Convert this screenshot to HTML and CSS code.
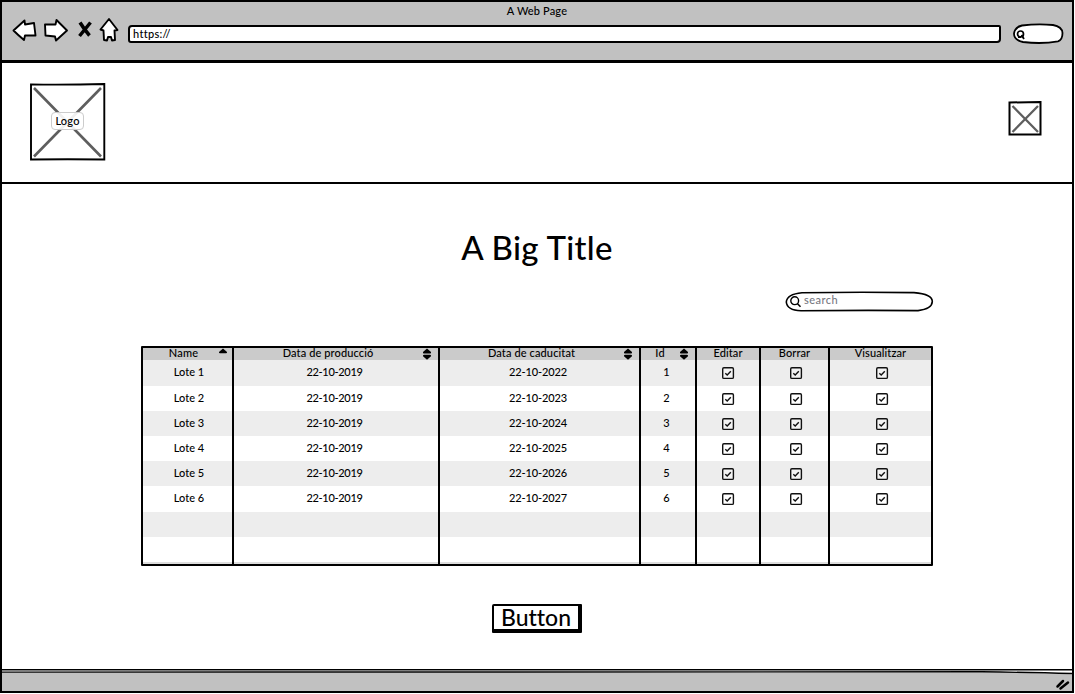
FILE: index.html
```html
<!DOCTYPE html>
<html lang="ca">
<head>
<meta charset="utf-8">
<title>A Web Page</title>
<link rel="stylesheet" href="styles.css">
</head>
<body>
<svg class="symbols" width="0" height="0" aria-hidden="true">
  <symbol id="check" viewBox="0 0 14 14">
    <rect x="1.7" y="1.7" width="10.7" height="10.7" rx="1.2" fill="#fff" fill-opacity=".35" stroke="#111" stroke-width="1.4"/>
    <path d="M4.3 7.2L6.2 9L9.8 5.2" fill="none" stroke="#111" stroke-width="1.4"/>
  </symbol>
  <symbol id="sort" viewBox="0 0 10 12">
    <path d="M5 .4L9 4Q9.4 5.500 8 5.500H2Q.6 5.500 1 4ZM5 11.800L9 8.200Q9.4 6.700 8 6.700H2Q.6 6.700 1 8.200Z"/>
  </symbol>
  <symbol id="asc" viewBox="0 0 10 12">
    <path d="M5 .6L9 4Q9.3 5.2 8 5.2H2Q.7 5.2 1 4Z"/>
  </symbol>
</svg>
<div class="window">
  <header class="chrome">
    <div class="chrome-title"><span>A Web Page</span></div>
    <div class="toolbar">
      <svg class="nav" width="115" height="32" viewBox="0 0 115 32">
        <g fill="#fff" stroke="#000" stroke-width="1.9" stroke-linejoin="round">
          <path d="M2.5 16.5L13.5 6.5L14 10.5L23 9L24.5 21.5L14 21.5L13 26Q7 21 2.5 16.5Z"/>
          <path d="M34 10.5L44.5 10.5L45.5 6L56 16.5L45 26.5L44 22.5L34.5 21.5Z"/>
          <path d="M98 5L89.500 15.5L92.500 16.5L93 26L96 26.5L97 23L100 23L101 26.5L104 26L103.5 16.5L106.500 16Z"/>
        </g>
        <path d="M69 8.500Q73 15 78.500 21.500M79.500 8.500L68.500 22" fill="none" stroke="#000" stroke-width="3.5"/>
      </svg>
      <div class="address"><span>https://</span></div>
      <svg class="mini-search" width="52" height="22" viewBox="0 0 52 22">
        <path d="M10 2.5Q26 .4 41 2Q50 3.500 50.500 10Q50.500 17 46 18.300Q30 21.300 11 19Q2 17 2 10.500Q3 4 10 2.500Z" fill="#fff" stroke="#000" stroke-width="1.8"/>
        <circle cx="8.500" cy="11" r="3" fill="none" stroke="#000" stroke-width="1.7"/>
        <path d="M9.500 12L12 16M6 14H9" stroke="#000" stroke-width="1.8"/>
      </svg>
    </div>
  </header>

  <section class="banner">
    <div class="logo">
      <svg width="76" height="78" viewBox="0 0 76 78">
        <path d="M1 1.500Q38 2 74.300 1V76.500Q38 76 1 76.500Z" fill="#fff" stroke="#000" stroke-width="1.9"/>
        <path d="M4 5L71 73.500M71 5L4 73.500" stroke="#5e5e5e" stroke-width="2.600"/>
      </svg>
      <span class="logo-label"><span>Logo</span></span>
    </div>
    <svg class="picture" width="34" height="35" viewBox="0 0 34 35">
      <path d="M1.500 1.500L32.500 1V33.500L1.500 33.500Z" fill="#fff" stroke="#000" stroke-width="2"/>
      <path d="M4.500 5L30 31M30 5L4.500 31" stroke="#5e5e5e" stroke-width="2.300"/>
    </svg>
  </section>

  <main class="content">
    <h1><span>A Big Title</span></h1>
    <div class="search">
      <svg width="149" height="22" viewBox="0 0 149 22">
        <path d="M17 1.700Q75 .800 129 1.600Q147.300 3 147.300 10.500Q147 18 133 19.600Q75 19 16 19.800Q2 19.200 1.300 11Q2 3 17 1.700Z" fill="#fff" stroke="#000" stroke-width="1.6"/>
        <circle cx="9.700" cy="9.700" r="3.900" fill="none" stroke="#000" stroke-width="1.400"/>
        <path d="M12.300 12.500L15.500 15.700" stroke="#000" stroke-width="1.6"/>
      </svg>
      <span class="placeholder">search</span>
    </div>

    <div class="table">
      <div class="row head">
        <div><span class="h-name">Name</span><svg class="sort"><use href="#asc"/></svg></div>
        <div><span class="h-date">Data de producció</span><svg class="sort"><use href="#sort"/></svg></div>
        <div><span class="h-date">Data de caducitat</span><svg class="sort"><use href="#sort"/></svg></div>
        <div><span class="h-id">Id</span><svg class="sort"><use href="#sort"/></svg></div>
        <div><span class="h-act">Editar</span></div>
        <div><span class="h-act">Borrar</span></div>
        <div><span class="h-act">Visualitzar</span></div>
      </div>
      <div class="row"><div><span>Lote 1</span></div><div><span class="date">22-10-2019</span></div><div><span class="date wide">22-10-2022</span></div><div><span>1</span></div><div><svg class="check"><use href="#check"/></svg></div><div><svg class="check"><use href="#check"/></svg></div><div><svg class="check"><use href="#check"/></svg></div></div>
      <div class="row"><div><span>Lote 2</span></div><div><span class="date">22-10-2019</span></div><div><span class="date wide">22-10-2023</span></div><div><span>2</span></div><div><svg class="check"><use href="#check"/></svg></div><div><svg class="check"><use href="#check"/></svg></div><div><svg class="check"><use href="#check"/></svg></div></div>
      <div class="row"><div><span>Lote 3</span></div><div><span class="date">22-10-2019</span></div><div><span class="date wide">22-10-2024</span></div><div><span>3</span></div><div><svg class="check"><use href="#check"/></svg></div><div><svg class="check"><use href="#check"/></svg></div><div><svg class="check"><use href="#check"/></svg></div></div>
      <div class="row"><div><span>Lote 4</span></div><div><span class="date">22-10-2019</span></div><div><span class="date wide">22-10-2025</span></div><div><span>4</span></div><div><svg class="check"><use href="#check"/></svg></div><div><svg class="check"><use href="#check"/></svg></div><div><svg class="check"><use href="#check"/></svg></div></div>
      <div class="row"><div><span>Lote 5</span></div><div><span class="date">22-10-2019</span></div><div><span class="date wide">22-10-2026</span></div><div><span>5</span></div><div><svg class="check"><use href="#check"/></svg></div><div><svg class="check"><use href="#check"/></svg></div><div><svg class="check"><use href="#check"/></svg></div></div>
      <div class="row"><div><span>Lote 6</span></div><div><span class="date">22-10-2019</span></div><div><span class="date wide">22-10-2027</span></div><div><span>6</span></div><div><svg class="check"><use href="#check"/></svg></div><div><svg class="check"><use href="#check"/></svg></div><div><svg class="check"><use href="#check"/></svg></div></div>
      <div class="row"><div></div><div></div><div></div><div></div><div></div><div></div><div></div></div>
      <div class="row"><div></div><div></div><div></div><div></div><div></div><div></div><div></div></div>
      <div class="row rest"><div></div><div></div><div></div><div></div><div></div><div></div><div></div></div>
    </div>

    <button class="button" type="button"><span>Button</span></button>
  </main>

  <footer class="status">
    <svg width="1070" height="22" viewBox="0 0 1070 22">
      <path d="M0 3.500L980 3.200Q1030 3.800 1071 5.200V24H0Z" fill="#c1c1c1"/>
      <path d="M0 .8H1071" stroke="#000" stroke-width="1.6" fill="none"/>
      <path d="M0 3.100L980 2.800Q1030 3.400 1071 4.600" stroke="#000" stroke-width="1.4" fill="none"/>
      <path d="M1055.500 17.500L1061 12M1058.500 19.500L1066 13.500" stroke="#000" stroke-width="2.500" stroke-linecap="round"/>
    </svg>
  </footer>
</div>
</body>
</html>
```
FILE: styles.css
```css
* { box-sizing: border-box; }
body {
  margin: 0;
  background: #fff;
  color: #000;
  font: 500 11px/14px Lato, "Open Sans", sans-serif;
  font-variant-ligatures: none;
}
svg { display: block; flex: none; }
span { white-space: nowrap; }
.symbols { position: absolute; }
.window {
  display: flex;
  flex-direction: column;
  width: 1074px;
  height: 693px;
  border: 2px solid #000;
}
.chrome {
  height: 61px;
  flex: none;
  background: #c1c1c1;
  border-bottom: 3px solid #000;
}
.chrome-title {
  height: 16px;
  padding-top: 2px;
  text-align: center;
  letter-spacing: .15px;
}
.toolbar {
  display: flex;
  align-items: flex-start;
  padding-left: 9px;
}
.nav { margin-top: -4px; }
.address {
  width: 873px;
  height: 18px;
  margin: 7px 0 0 2px;
  padding-left: 3px;
  line-height: 13px;
  background: #fff;
  border: 2px solid #000;
  border-radius: 4px 2px 4px 3px;
  letter-spacing: .3px;
}
.mini-search { margin: 5px 0 0 11px; }
.banner {
  display: flex;
  justify-content: space-between;
  height: 121px;
  flex: none;
  padding: 20px 30px 0 28px;
  border-bottom: 2px solid #000;
}
.logo { display: grid; height: 78px; }
.logo > * { grid-area: 1 / 1; }
.logo-label {
  place-self: center;
  width: 33px;
  height: 18px;
  margin-right: 1px;
  margin-top: -3px;
  text-align: center;
  line-height: 16px;
  letter-spacing: .2px;
  background: rgba(255, 255, 255, .9);
  border: 1px solid #ccc;
  border-radius: 4px;
}
.picture { margin-top: 18px; }
.content {
  display: flex;
  flex-direction: column;
  flex: 1;
  min-height: 0;
}
h1 {
  height: 46px;
  margin: 41px 0 0;
  text-align: center;
  font-size: 33px;
  font-weight: 500;
  line-height: 45px;
  letter-spacing: .3px;
}
.search {
  display: grid;
  width: 149px;
  height: 22px;
  margin: 20px 0 0 783px;
}
.search > * { grid-area: 1 / 1; }
.placeholder {
  padding: 2px 0 0 19px;
  color: #777982;
  letter-spacing: .45px;
}
.table {
  width: 792px;
  height: 220px;
  flex: none;
  margin: 33px 0 0 139px;
  border: 2px solid #000;
  border-radius: 1px;
}
.row {
  display: grid;
  grid-template-columns: 89px 206px 201px 56px 64px 69px 1fr;
  height: 25.2px;
}
.row:nth-child(even) { background: #ededed; }
.row.head { height: 12.4px; background: #cbcbcb; line-height: 10px; }
.row > div {
  display: flex;
  justify-content: center;
  padding-top: 5px;
}
.row > div:first-child { padding-left: 3px; }
.row > div:nth-child(2),
.row > div:nth-child(3),
.row > div:nth-child(4) { padding-right: 3px; }
.row > div:nth-child(6) { padding-left: 2px; }
.row > div:nth-child(7) { padding-left: 3px; }
.row.rest { height: 2px; background: #ddd; }
.row.rest > div { padding: 0; }
.row > div + div { border-left: 2px solid #000; }
.row.head > div { padding: 0; }
.row.head > div:nth-child(-n+4) {
  display: grid;
  grid-template-columns: 1fr 16px;
  text-align: center;
}
.row.head > div > .h-date,
.row.head > div > .h-id { letter-spacing: .12px; }
.row.head > div > .h-name { margin-right: -6px; letter-spacing: .15px; }
.row.head > div:first-child { grid-template-columns: 1fr 14px; }
.sort { width: 10px; height: 12px; }
.h-act { letter-spacing: .1px; }
.check { width: 14px; height: 14px; margin-top: 1px; }
.date { letter-spacing: -.3px; }
.date.wide { letter-spacing: -.1px; }
.button {
  width: 90px;
  height: 29px;
  flex: none;
  margin: 38px 0 0 490px;
  padding: 0;
  color: #000;
  font: 500 23px/23px Lato, sans-serif;
  font-variant-ligatures: none;
  background: #fff;
  border: solid #000;
  border-width: 2px 4px 4px 2px;
  border-radius: 2px 1px 1px 1px;
}
.status { height: 22px; flex: none; }
```
